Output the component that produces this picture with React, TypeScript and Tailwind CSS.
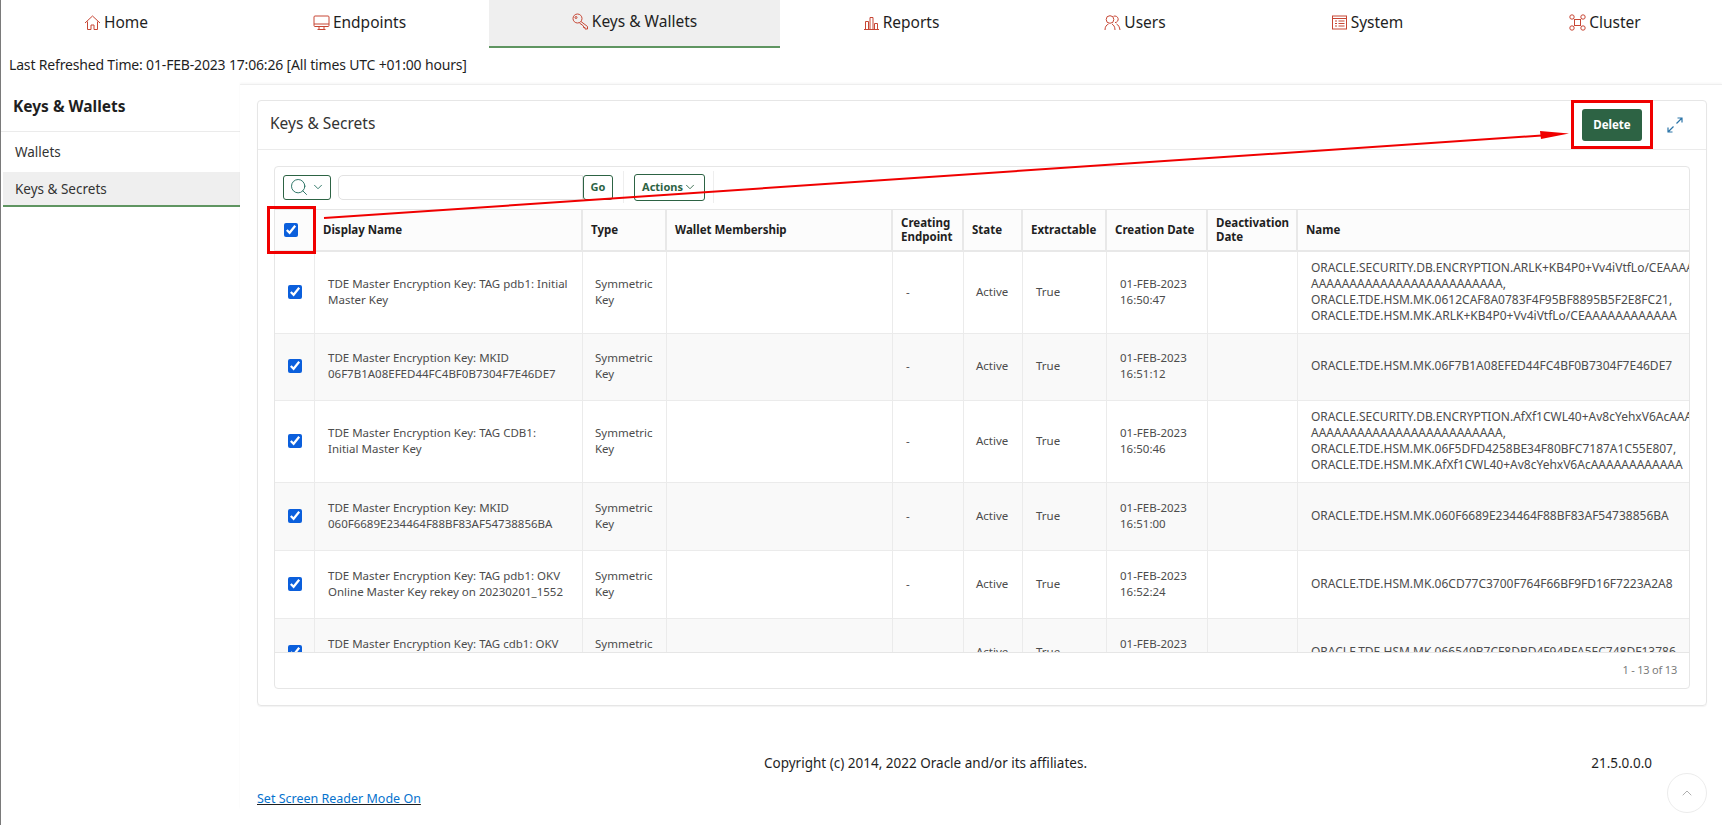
import React from 'react';
import { Search, ChevronDown, ChevronUp } from 'lucide-react';

const iconProps = {
  width: 17,
  height: 17,
  viewBox: '0 0 17 17',
  fill: 'none',
  stroke: '#c74634',
  strokeWidth: 1,
};

const HomeIcon = () => (
  <svg {...iconProps}>
    <path d="M1 9 8.500 2 16 9M3.500 7.500V15.500H7V11H10V15.500H13.500V7.500" />
  </svg>
);
const MonitorIcon = () => (
  <svg {...iconProps}>
    <rect x="1" y="2" width="15" height="10.500" rx="1" />
    <path d="M1 10h15M6 12.500v3h5v-3M4.500 15.500h8" />
  </svg>
);
const KeyIcon = () => (
  <svg {...iconProps}>
    <circle cx="5.500" cy="5.500" r="4.500" />
    <circle cx="4" cy="4.500" r="1" />
    <path d="M9 8.500 15.500 13.500V16H13V14.500H11.500V13L7.500 10" />
  </svg>
);
const ChartIcon = () => (
  <svg {...iconProps}>
    <path d="M1 15.500h15M2.500 15.500V7.500h3v8M7 15.500V3.500h3v12M11.500 15.500V9.500h3v6" />
  </svg>
);
const UsersIcon = () => (
  <svg {...iconProps}>
    <circle cx="6" cy="5.500" r="3.800" />
    <path d="M9.500 2.300a3.300 3.300 0 1 1 1.500 6.300" />
    <path d="M1 16c0-3.500 1.500-5 3.500-6M11 16c0-3.500-1.500-5-3-6M12.500 10c2 1 3 3 3.500 6" />
  </svg>
);
const SystemIcon = () => (
  <svg {...iconProps}>
    <rect x="1.500" y="2" width="14" height="13" />
    <path d="M1.500 4.500h14M4 7h2M7.500 7h6M4 9.500h2M7.500 9.500h6M4 12h2M7.500 12h6" />
  </svg>
);
const ClusterIcon = () => (
  <svg {...iconProps}>
    <circle cx="3" cy="3" r="2.200" />
    <circle cx="14" cy="3" r="2.200" />
    <circle cx="3" cy="14" r="2.200" />
    <circle cx="14" cy="14" r="2.200" />
    <rect x="5.500" y="5.500" width="6" height="6" />
    <path d="M4.500 4.500l1 1M12.500 4.500l-1 1M4.500 12.500l1-1M12.500 12.500l-1-1" />
  </svg>
);

const tabs = [
  { label: 'Home', icon: HomeIcon, cls: '' },
  { label: 'Endpoints', icon: MonitorIcon, cls: '' },
  { label: 'Keys & Wallets', icon: KeyIcon, cls: 'border-b-2 border-[#5f9561] bg-[#efefef]' },
  { label: 'Reports', icon: ChartIcon, cls: '' },
  { label: 'Users', icon: UsersIcon, cls: 'pl-1' },
  { label: 'System', icon: SystemIcon, cls: '' },
  { label: 'Cluster', icon: ClusterIcon, cls: '' },
];

const columns = [
  { label: '', width: 40 },
  { label: 'Display Name', width: 268 },
  { label: 'Type', width: 84 },
  { label: 'Wallet Membership', width: 226 },
  { label: 'Creating Endpoint', width: 71 },
  { label: 'State', width: 59 },
  { label: 'Extractable', width: 84 },
  { label: 'Creation Date', width: 101 },
  { label: 'Deactivation Date', width: 90 },
  { label: 'Name', width: 500 },
];

const rows = [
  {
    h: 82,
    display: ['TDE Master Encryption Key: TAG pdb1: Initial', 'Master Key'],
    date: '16:50:47',
    name: [
      'ORACLE.SECURITY.DB.ENCRYPTION.ARLK+KB4P0+Vv4iVtfLo/CEAAAAAAAAAAAA',
      'AAAAAAAAAAAAAAAAAAAAAAAAA,',
      'ORACLE.TDE.HSM.MK.0612CAF8A0783F4F95BF8895B5F2E8FC21,',
      'ORACLE.TDE.HSM.MK.ARLK+KB4P0+Vv4iVtfLo/CEAAAAAAAAAAAA',
    ],
  },
  {
    h: 67,
    display: ['TDE Master Encryption Key: MKID', '06F7B1A08EFED44FC4BF0B7304F7E46DE7'],
    date: '16:51:12',
    name: ['ORACLE.TDE.HSM.MK.06F7B1A08EFED44FC4BF0B7304F7E46DE7'],
  },
  {
    h: 82,
    display: ['TDE Master Encryption Key: TAG CDB1:', 'Initial Master Key'],
    date: '16:50:46',
    name: [
      'ORACLE.SECURITY.DB.ENCRYPTION.AfXf1CWL40+Av8cYehxV6AcAAAAAAAAAAA',
      'AAAAAAAAAAAAAAAAAAAAAAAAA,',
      'ORACLE.TDE.HSM.MK.06F5DFD4258BE34F80BFC7187A1C55E807,',
      'ORACLE.TDE.HSM.MK.AfXf1CWL40+Av8cYehxV6AcAAAAAAAAAAAA',
    ],
  },
  {
    h: 68,
    display: ['TDE Master Encryption Key: MKID', '060F6689E234464F88BF83AF54738856BA'],
    date: '16:51:00',
    name: ['ORACLE.TDE.HSM.MK.060F6689E234464F88BF83AF54738856BA'],
  },
  {
    h: 68,
    display: ['TDE Master Encryption Key: TAG pdb1: OKV', 'Online Master Key rekey on 20230201_1552'],
    date: '16:52:24',
    name: ['ORACLE.TDE.HSM.MK.06CD77C3700F764F66BF9FD16F7223A2A8'],
  },
  {
    h: 68,
    display: ['TDE Master Encryption Key: TAG cdb1: OKV', 'Online Master Key rekey on 20230201_1552'],
    date: '16:52:30',
    name: ['ORACLE.TDE.HSM.MK.066549B7CF8DBD4F94BFA5EC748DF13786'],
  },
];

const Lines = ({ lines }: { lines: string[] }) => (
  <>
    {lines.map((line) => (
      <span key={line} className="block whitespace-nowrap">
        {line}
      </span>
    ))}
  </>
);

const cellClass = 'border-r border-b border-[#ebebeb] pb-0.5 pl-[13px] align-middle';

export default function App() {
  return (
    <div className="relative h-screen overflow-hidden border-l border-[#7a7a7a] bg-white font-['Noto_Sans','Liberation_Sans',sans-serif] text-[#1f1f1f]">
      <nav className="ml-px grid h-12 grid-cols-[228px_259px_291px_242px_222px_246px_230px]">
        {tabs.map((tab) => (
          <a key={tab.label} className={`flex items-center justify-center gap-[3px] pb-[3px] text-[15.5px] ${tab.cls}`}>
            <tab.icon />
            <span>{tab.label}</span>
          </a>
        ))}
      </nav>

      <div className="flex h-9 items-center pb-[3px] pl-2 text-[14px] tracking-[-0.17px]">
        Last Refreshed Time: 01-FEB-2023 17:06:26 [All times UTC +01:00 hours]
      </div>

      <div className="flex">
        <aside className="w-[239px] shrink-0">
          <div className="flex h-12 items-center border-b border-[#ebebeb] pb-0.5 pl-3 text-[15.5px] font-bold">Keys &amp; Wallets</div>
          <a className="flex h-10 items-center pl-[14px] text-[13.5px] text-[#333]">Wallets</a>
          <a className="ml-0.5 flex h-[35px] items-center border-b-2 border-[#5f9561] bg-[#efefef] pt-0.5 pl-3 text-[13.5px] text-[#333]">
            Keys &amp; Secrets
          </a>
        </aside>

        <main className="min-w-0 flex-1 border-t border-[#eeeeee] shadow-[0_-1px_2px_rgba(0,0,0,0.04)]">
          <section className="mt-[15px] ml-[17px] w-[1450px] rounded-sm border border-[#e6e6e6] shadow-[0_1px_1px_rgba(0,0,0,0.05)]">
            <header className="flex h-[49px] items-center border-b border-[#ebebeb] pl-3">
              <h2 className="pb-0.5 text-[15.5px] text-[#333]">Keys &amp; Secrets</h2>
              <button className="ml-auto h-8 w-[60px] rounded-[3px] bg-[#2d6344] text-[11.5px] font-bold text-white">Delete</button>
              <span className="mr-[23px] ml-[25px] text-[#2b74a8]">
                <svg width="16" height="16" viewBox="0 0 16 16" fill="none" stroke="currentColor" strokeWidth="1.2">
                  <path d="M9.500 6.500 15 1M10.500 1H15V5.500M6.500 9.500 1 15M5.500 15H1V10.500" />
                </svg>
              </span>
            </header>

            <div className="p-[16px]">
              <div className="w-[1416px] rounded-sm border border-[#e6e6e6]">
                <div className="flex h-[42px] items-center pb-0.5 pl-2">
                  <button className="flex h-[25px] w-12 items-center justify-center gap-0.5 rounded-[3px] border border-[#2d6344] text-[#1f6b5c]">
                    <Search size={20} strokeWidth={1.1} />
                    <ChevronDown size={14} strokeWidth={1.5} />
                  </button>
                  <div className="ml-[7px] h-[25px] w-[245px] rounded-l-[5px] border border-[#e2e2e2]" />
                  <button className="h-[25px] w-[30px] rounded-[3px] border border-[#2d6344] text-[11px] font-bold text-[#2d6344]">Go</button>
                  <span className="mr-[10px] ml-[10px] h-8 w-px bg-[#eeeeee]" />
                  <button className="flex h-[27px] w-[71px] items-center justify-center rounded-[3px] border border-[#2d6344] text-[11px] font-bold text-[#2d6344]">
                    Actions
                    <ChevronDown size={14} strokeWidth={1.5} />
                  </button>
                  <span className="ml-2 h-8 w-px bg-[#eeeeee]" />
                </div>

                <div className="h-[444px] overflow-hidden border-t border-b border-[#e6e6e6]">
                  <table className="w-[1523px] table-fixed border-separate border-spacing-0 text-left">
                    <colgroup>
                      {columns.map((col) => (
                        <col key={col.label} style={{ width: col.width }} />
                      ))}
                    </colgroup>
                    <thead>
                      <tr className="h-[42px] bg-[#fcfcfc] text-[11.5px] leading-[14px] font-bold text-[#1f1f1f]">
                        {columns.map((col) => (
                          <th
                            key={col.label}
                            className={
                              col.label
                                ? 'border-r-2 border-b-2 border-[#e8e8e8] pl-2 font-bold'
                                : 'border-r border-b-2 border-[#e8e8e8] pl-[9px]'
                            }
                          >
                            {col.label || <input type="checkbox" defaultChecked className="block size-[14px] accent-[#0b5fdc]" />}
                          </th>
                        ))}
                      </tr>
                    </thead>
                    <tbody className="text-[11.5px] leading-4 text-[#4c4c4c]">
                      {rows.map((row, i) => (
                        <tr key={row.date} style={{ height: row.h }} className={i % 2 ? 'bg-[#f9f9f9]' : 'bg-white'}>
                          <td className="border-r border-b border-[#ebebeb] pb-0.5 pl-[13px] align-middle">
                            <input type="checkbox" defaultChecked className="block size-[14px] accent-[#0b5fdc]" />
                          </td>
                          <td className={cellClass}><Lines lines={row.display} /></td>
                          <td className="border-r border-b border-[#ebebeb] pb-0.5 pl-3 align-middle"><Lines lines={['Symmetric', 'Key']} /></td>
                          <td className={cellClass} />
                          <td className={cellClass}>-</td>
                          <td className="border-r border-b border-[#ebebeb] pb-0.5 pl-3 align-middle">Active</td>
                          <td className={cellClass}>True</td>
                          <td className={cellClass}><Lines lines={['01-FEB-2023', row.date]} /></td>
                          <td className={cellClass} />
                          <td className="border-r border-b border-[#ebebeb] pb-0.5 pl-[13px] align-middle text-[12px]"><Lines lines={row.name} /></td>
                        </tr>
                      ))}
                    </tbody>
                  </table>
                </div>

                <div className="flex h-[35px] items-center justify-end pr-3 text-[11px] tracking-[-0.2px] text-[#7b7b7b]">1 - 13 of 13</div>
              </div>
            </div>
          </section>

          <footer className="w-[1467px] pl-[18px] text-[13.5px] text-[#1f1f1f]">
            <div className="flex pt-[47px]">
              <span className="ml-[506px]">Copyright (c) 2014, 2022 Oracle and/or its affiliates.</span>
              <span className="mr-[55px] ml-auto">21.5.0.0.0</span>
            </div>
            <a className="mt-[17px] -ml-px inline-block text-[12.5px] text-[#0572ce] underline decoration-[#1f1f1f]">Set Screen Reader Mode On</a>
          </footer>
        </main>
      </div>

      {/* review annotations drawn over the page */}
      <div className="absolute top-[206px] left-[266px] h-12 w-[49px] border-[3px] border-[#f00000]" />
      <div className="absolute top-[100px] left-[1570px] h-[49px] w-[82px] border-[3px] border-[#f00000]" />
      <svg className="pointer-events-none absolute top-0 left-0" width="1722" height="825">
        <line x1="323" y1="218" x2="1548" y2="135" stroke="#f00000" strokeWidth="2" />
        <polygon points="1568,133.500 1539,131 1540,139" fill="#f00000" />
      </svg>

      <button className="absolute top-[773px] left-[1666px] flex size-10 items-center justify-center rounded-full border border-[#ececec] text-[#9a9a9a]">
        <ChevronUp size={16} strokeWidth={1.2} />
      </button>
    </div>
  );
}
